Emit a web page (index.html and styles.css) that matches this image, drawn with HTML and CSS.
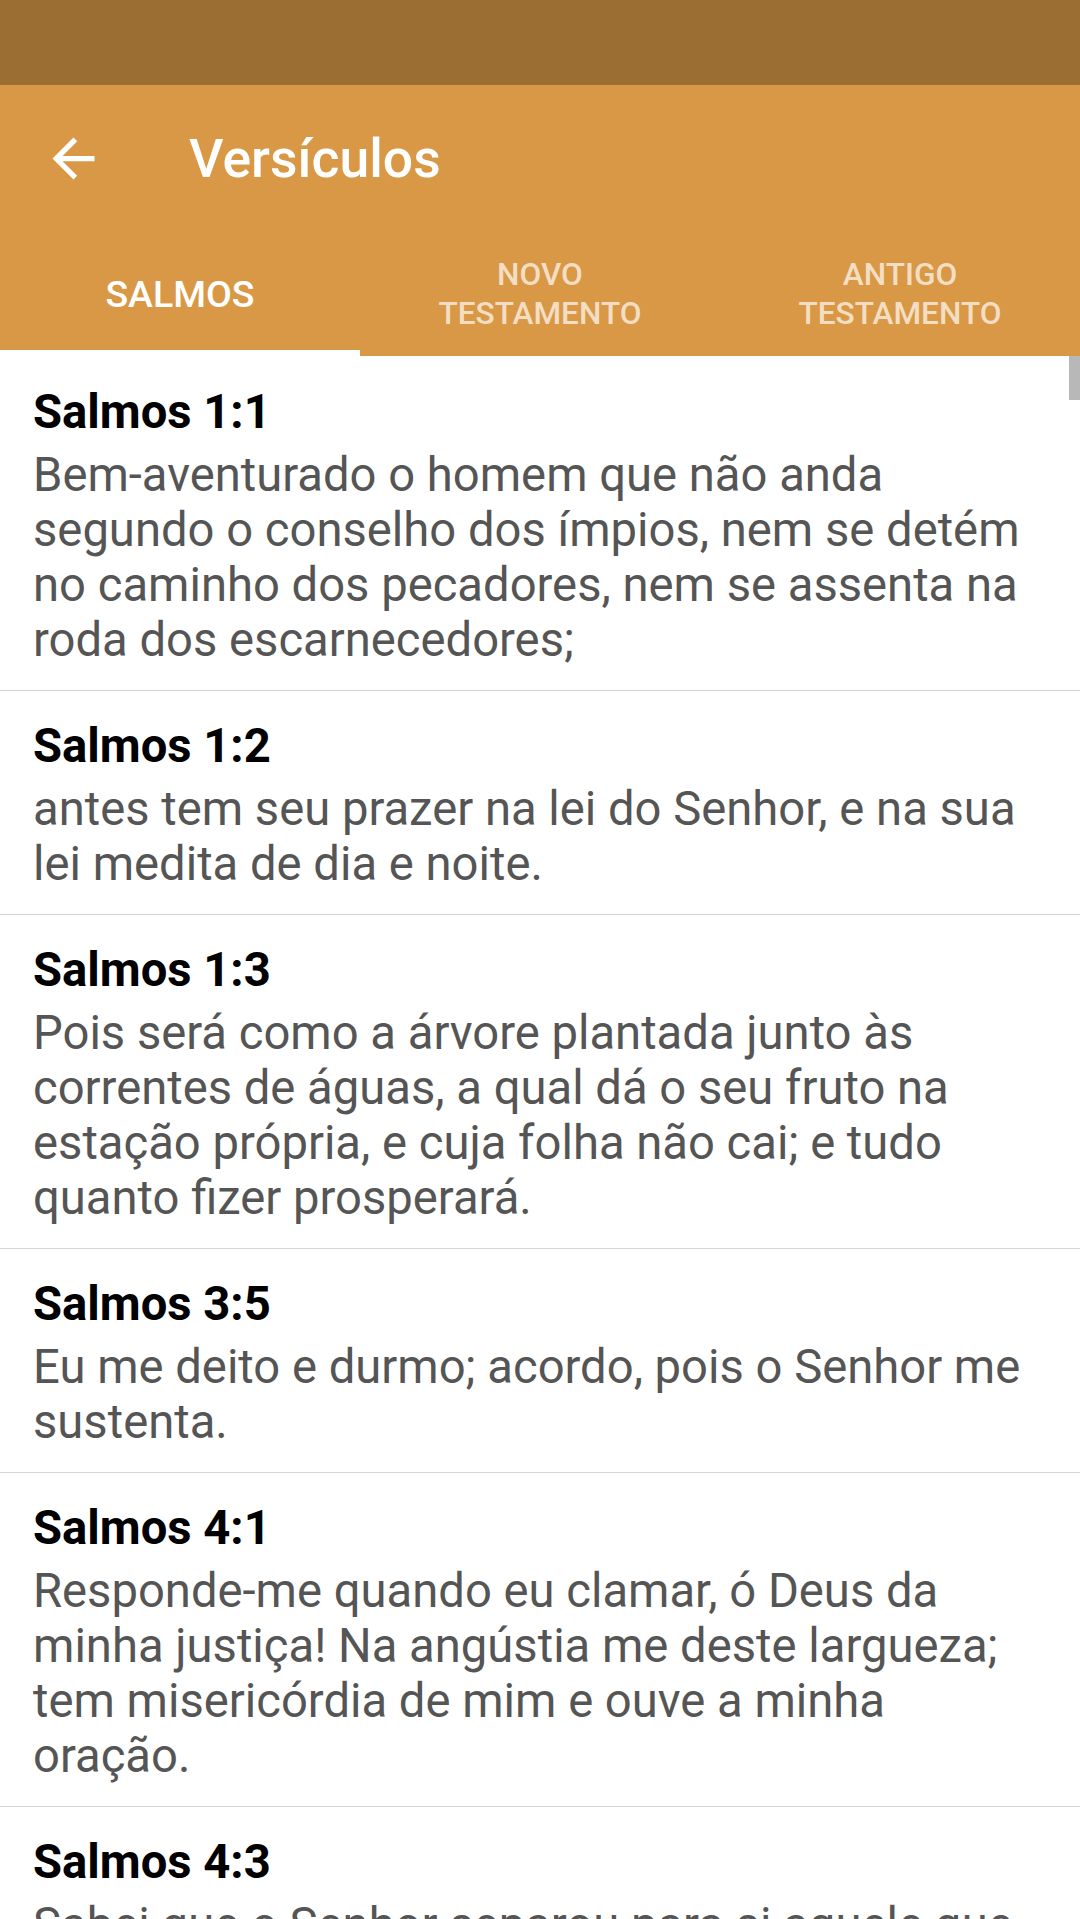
FILE: index.html
```html
<!DOCTYPE html>
<html lang="pt">
<head>
    <meta charset="UTF-8">
    <meta name="viewport" content="width=device-width, initial-scale=1.0">
    <title>Versículos</title>
    <link rel="stylesheet" href="styles.css">
</head>
<body>
    <!-- Status bar -->
    <div class="status-bar"></div>
    <!-- App bar with back button and title -->
    <header class="app-bar">
        <div class="toolbar">
            <button class="back-btn" aria-label="Voltar">
                <svg viewBox="0 0 24 24" width="63" height="63">
                    <path fill="#fff" d="M20 11H7.83l5.59-5.59L12 4l-8 8 8 8 1.41-1.41L7.83 13H20v-2z"/>
                </svg>
            </button>
            <h1 class="toolbar-title">Versículos</h1>
        </div>
        <!-- Tabs -->
        <nav class="tabs">
            <div class="tab active">Salmos</div>
            <div class="tab two-line">Novo<br>Testamento</div>
            <div class="tab two-line">Antigo<br>Testamento</div>
        </nav>
    </header>
    <!-- Verse list -->
    <main class="verse-list">
        <div class="scroll-thumb"></div>
        <div class="verse">
            <div class="verse-ref">Salmos 1:1</div>
            <div class="verse-text">Bem-aventurado o homem que não anda segundo o conselho dos ímpios, nem se detém no caminho dos pecadores, nem se assenta na roda dos escarnecedores;</div>
        </div>
        <div class="verse">
            <div class="verse-ref">Salmos 1:2</div>
            <div class="verse-text">antes tem seu prazer na lei do Senhor, e na sua lei medita de dia e noite.</div>
        </div>
        <div class="verse">
            <div class="verse-ref">Salmos 1:3</div>
            <div class="verse-text">Pois será como a árvore plantada junto às correntes de águas, a qual dá o seu fruto na estação própria, e cuja folha não cai; e tudo quanto fizer prosperará.</div>
        </div>
        <div class="verse">
            <div class="verse-ref">Salmos 3:5</div>
            <div class="verse-text">Eu me deito e durmo; acordo, pois o Senhor me sustenta.</div>
        </div>
        <div class="verse">
            <div class="verse-ref">Salmos 4:1</div>
            <div class="verse-text">Responde-me quando eu clamar, ó Deus da minha justiça! Na angústia me deste largueza; tem misericórdia de mim e ouve a minha oração.</div>
        </div>
        <div class="verse">
            <div class="verse-ref">Salmos 4:3</div>
            <div class="verse-text">Sabei que o Senhor separou para si aquele que lhe é querido; o Senhor ouvirá quando eu clamar a ele.</div>
        </div>
    </main>
</body>
</html>
```

FILE: styles.css
```css
/* Global */
* {
    box-sizing: border-box;
}
body {
    margin: 0;
    width: 1080px;
    height: 1919px;
    overflow: hidden;
    background-color: #ffffff;
    font-family: Roboto, "Noto Sans", sans-serif;
}
/* Status bar */
.status-bar {
    height: 85px;
    background-color: #9b6f33;
}
/* App bar */
.app-bar {
    background-color: #d99845;
}
.toolbar {
    height: 147px;
    display: flex;
    align-items: center;
}
.back-btn {
    width: 63px;
    height: 63px;
    margin-left: 42px;
    padding: 0;
    border: none;
    background: none;
    display: flex;
}
.toolbar-title {
    margin: 0 0 0 84px;
    font-size: 53.5px;
    font-weight: 500;
    color: #ffffff;
}
/* Tabs */
.tabs {
    display: flex;
    height: 124px;
}
.tab {
    flex: 1;
    display: flex;
    align-items: center;
    justify-content: center;
    text-align: center;
    text-transform: uppercase;
    font-size: 37.5px;
    font-weight: 500;
    color: rgba(255, 255, 255, 0.7);
    border-bottom: 6px solid transparent;
    padding-top: 6px;
}
.tab.two-line {
    font-size: 31.6px;
    line-height: 39px;
}
.tab.active {
    color: #ffffff;
    border-bottom-color: #ffffff;
}
/* Verse list */
.verse-list {
    position: relative;
    padding-top: 1px;
}
.scroll-thumb {
    position: absolute;
    top: 0;
    right: 0;
    width: 11px;
    height: 44px;
    background-color: #b8b8b8;
}
.verse {
    padding: 28px 33px 22px 33px;
    border-bottom: 1px solid #d4d4d4;
}
.verse-ref {
    font-size: 47.2px;
    font-weight: 700;
    line-height: 55px;
    color: #000000;
    margin-bottom: 8px;
}
.verse-text {
    font-size: 47.2px;
    line-height: 55px;
    color: #555555;
}
```
